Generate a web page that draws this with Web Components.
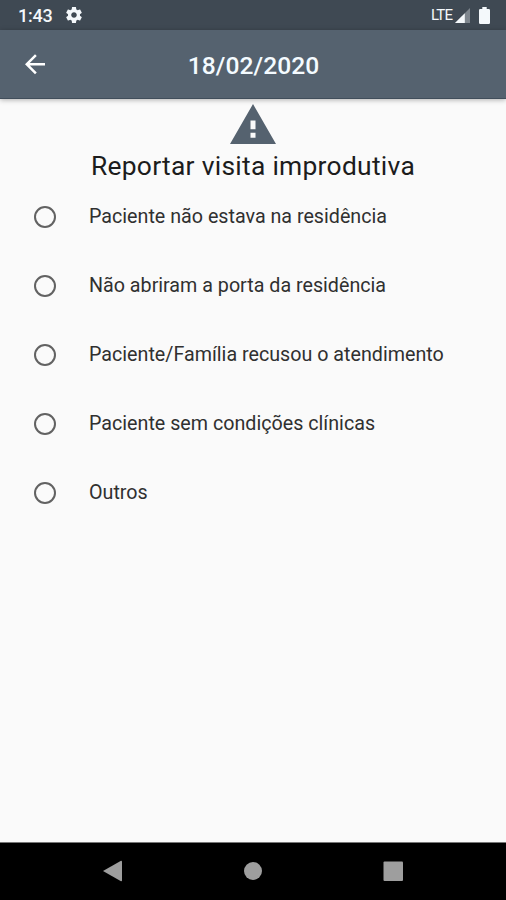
<!DOCTYPE html>
<html lang="pt-BR">
<head>
<meta charset="utf-8">
<title>Reportar visita improdutiva</title>
<style>
html, body { margin: 0; height: 100%; }
body { font-family: Roboto, sans-serif; background: #fafafa; overflow: hidden; }
</style>
</head>
<body>
<visit-screen></visit-screen>
<script>
function define(name, html) {
  const template = document.createElement('template');
  template.innerHTML = html;
  customElements.define(name, class extends HTMLElement {
    constructor() {
      super();
      this.attachShadow({ mode: 'open' }).append(template.content.cloneNode(true));
    }
  });
}

define('status-bar', `
<style>
:host { display: flex; align-items: center; box-sizing: border-box; height: 30px; padding: 0 16px 0 18px; background: #3f4953; color: #f4f8fb; }
.time { font-size: 18px; font-weight: 500; line-height: 28px; width: 48px; letter-spacing: -.2px; padding-top: 2px; }
.net { font-size: 15px; line-height: 28px; margin-left: auto; width: 24px; letter-spacing: -0.8px; white-space: nowrap; }
svg { display: block; fill: currentColor; }
.battery { margin-left: 9px; }
</style>
<span class="time">1:43</span>
<svg width="16" height="16" viewBox="2 2 20 20"><path d="M19.43 12.98c.04-.32.07-.64.07-.98s-.03-.66-.07-.98l2.11-1.65c.19-.15.24-.42.12-.64l-2-3.46c-.12-.22-.39-.3-.61-.22l-2.49 1c-.52-.4-1.08-.73-1.69-.98l-.38-2.65C14.46 2.18 14.25 2 14 2h-4c-.25 0-.46.18-.49.42l-.38 2.65c-.61.25-1.17.59-1.69.98l-2.49-1c-.23-.09-.49 0-.61.22l-2 3.46c-.13.22-.07.49.12.64l2.11 1.65c-.04.32-.07.65-.07.98s.03.66.07.98l-2.11 1.65c-.19.15-.24.42-.12.64l2 3.46c.12.22.39.3.61.22l2.49-1c.52.4 1.08.73 1.69.98l.38 2.65c.03.24.24.42.49.42h4c.25 0 .46-.18.49-.42l.38-2.65c.61-.25 1.17-.59 1.69-.98l2.49 1c.23.09.49 0 .61-.22l2-3.46c.12-.22.07-.49-.12-.64l-2.11-1.65zM12 15.5c-1.93 0-3.5-1.57-3.5-3.5s1.57-3.5 3.5-3.5 3.5 1.57 3.5 3.5-1.57 3.5-3.5 3.5z"/></svg>
<span class="net">LTE</span>
<svg width="15" height="15" viewBox="0 0 15 15"><path d="M0 15L15 0v15z" opacity=".35"/><path d="M0 15L9.8 5.2V15z"/></svg>
<svg class="battery" width="11" height="17" viewBox="0 0 11 17"><path d="M1.2 2H3.3V0h4.4v2h2.1Q11 2 11 3.2v12.6Q11 17 9.8 17H1.2Q0 17 0 15.8V3.2Q0 2 1.2 2z"/></svg>
`);

define('app-bar', `
<style>
:host { display: grid; grid-template-columns: 70px 1fr 70px; align-items: center; box-sizing: border-box; height: 69px; background: #55626f; border-bottom: 1px solid #414e5b; box-shadow: 0 1px 5px rgba(0,0,0,.3); color: #fff; position: relative; }
svg { display: block; justify-self: center; }
.title { text-align: center; font-size: 24.6px; font-weight: 500; line-height: 30px; padding-top: 3px; letter-spacing: .05px; padding-left: 1px; color: #f4fbff; }
</style>
<svg width="30" height="30" viewBox="0 -.2 24 24" fill="#fff"><path d="M20 11H7.83l5.59-5.59L12 4l-8 8 8 8 1.41-1.41L7.83 13H20v-2z"/></svg>
<div class="title"><slot></slot></div>
`);

define('warning-heading', `
<style>
:host { display: flex; flex-direction: column; align-items: center; padding-top: 5px; color: #1c1c1c; }
svg { display: block; }
.text { font-size: 26.4px; line-height: 32px; margin-top: 6px; padding-bottom: 1px; white-space: nowrap; letter-spacing: .28px; }
</style>
<svg width="46" height="40" viewBox="1 2 22 19" preserveAspectRatio="none" fill="#55626f"><path d="M1 21h22L12 2 1 21zm12.2-3h-2.4v-2.3h2.4V18zm0-4h-2.4v-4.2h2.4V14z"/></svg>
<div class="text"><slot></slot></div>
`);

define('radio-option', `
<style>
:host { display: flex; align-items: center; height: 69px; padding-left: 34px; color: #303030; }
:host(:first-of-type) { margin-top: -1px; }
.ring { box-sizing: border-box; flex: none; width: 22px; height: 22px; border: 2.2px solid #626262; border-radius: 50%; }
.label { margin-left: 33px; font-size: 19.7px; line-height: 24px; white-space: nowrap; }
</style>
<span class="ring"></span><span class="label"><slot></slot></span>
`);

define('nav-bar', `
<style>
:host { display: grid; grid-template-columns: repeat(3, 140px); justify-content: center; align-items: center; justify-items: center; box-sizing: border-box; height: 58px; padding-bottom: 2px; background: #000; border-top: 1px solid #777; }
svg { display: block; fill: #9e9e9e; }
</style>
<svg width="20" height="22" viewBox="0 0 20 22"><path d="M0 11L18 .7Q19 .5 19 1.5v19q0 1-1 .8z"/></svg>
<svg width="18" height="18" viewBox="0 0 18 18"><circle cx="9" cy="9" r="9"/></svg>
<svg width="20" height="20" viewBox="0 0 20 20"><rect x=".5" y=".5" width="19.5" height="19.5" rx="1"/></svg>
`);

define('visit-screen', `
<style>
:host { display: flex; flex-direction: column; height: 100vh; background: #fafafa; }
main { flex: 1; }
</style>
<status-bar></status-bar>
<app-bar>18/02/2020</app-bar>
<main>
<warning-heading>Reportar visita improdutiva</warning-heading>
<radio-option>Paciente não estava na residência</radio-option>
<radio-option>Não abriram a porta da residência</radio-option>
<radio-option>Paciente/Família recusou o atendimento</radio-option>
<radio-option>Paciente sem condições clínicas</radio-option>
<radio-option>Outros</radio-option>
</main>
<nav-bar></nav-bar>
`);
</script>
</body>
</html>
